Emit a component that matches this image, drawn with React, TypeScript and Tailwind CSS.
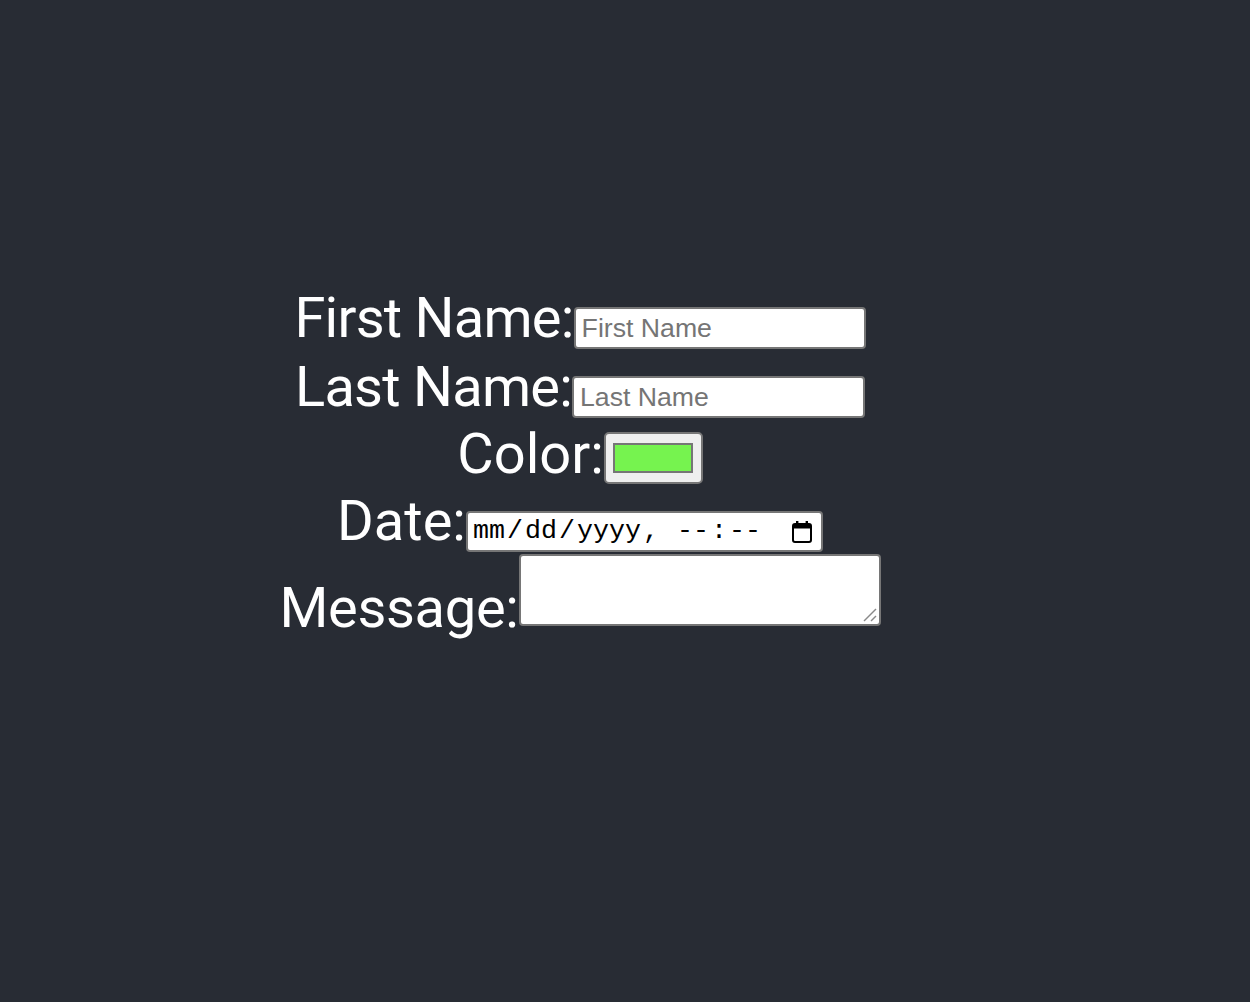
import React from "react";

const labelCls = "text-white text-[56px] leading-[66px] whitespace-nowrap";
const boxCls = "border-2 border-[#767676] rounded-[4px] bg-white";

const Seg = ({ children }: { children: React.ReactNode }) => (
  <span className="px-[2px] whitespace-pre">{children}</span>
);

const CalendarIcon = () => (
  <svg width="20" height="22" viewBox="0 0 20 22" className="shrink-0">
    <rect x="4" y="0" width="2.4" height="4" fill="#000" />
    <rect x="13.6" y="0" width="2.4" height="4" fill="#000" />
    <rect x="1" y="3" width="18" height="18" rx="2" fill="none" stroke="#000" strokeWidth="2" />
    <rect x="1" y="3" width="18" height="4.5" fill="#000" />
  </svg>
);

export default function App() {
  return (
    <div
      className="min-h-screen bg-[#282c34] pt-[285px]"
      style={{ fontFamily: "Roboto, 'Noto Sans', sans-serif" }}
    >
      <form className="w-[1160px] flex flex-col">
        <div className="h-[69px] flex justify-center items-start">
          <label className={`${labelCls} tracking-[-0.75px]`}>First Name:</label>
          <input
            placeholder="First Name"
            className={`${boxCls} mt-[22px] w-[292px] h-[42px] px-[6px] text-[26.67px] text-black placeholder:text-[#757575] outline-none`}
            style={{ fontFamily: "'Liberation Sans', Arial, sans-serif" }}
          />
        </div>
        <div className="h-[67px] flex justify-center items-start">
          <label className={`${labelCls} tracking-[-0.75px]`}>Last Name:</label>
          <input
            placeholder="Last Name"
            className={`${boxCls} mt-[22px] w-[293px] h-[42px] px-[6px] text-[26.67px] text-black placeholder:text-[#757575] outline-none`}
            style={{ fontFamily: "'Liberation Sans', Arial, sans-serif" }}
          />
        </div>
        <div className="h-[67px] flex justify-center items-start">
          <label className={labelCls}>Color:</label>
          <div className="mt-[11px] w-[99px] h-[52px] border-2 border-[#767676] rounded-[5px] bg-[#efefef] flex items-center justify-center">
            <div className="w-[80px] h-[30px] border-2 border-[#767676] bg-[#76f34f]" />
          </div>
        </div>
        <div className="h-[66px] flex justify-center items-start">
          <label className={labelCls}>Date:</label>
          <div
            className={`${boxCls} mt-[23px] w-[357px] h-[41px] pl-[3px] pr-[9px] flex items-center text-[26.67px] text-black leading-none`}
            style={{ fontFamily: "'Liberation Mono', 'Courier New', monospace" }}
          >
            <Seg>mm</Seg>
            <span>/</span>
            <Seg>dd</Seg>
            <span>/</span>
            <Seg>yyyy</Seg>
            <span className="whitespace-pre">, </span>
            <Seg>--</Seg>
            <span>:</span>
            <Seg>--</Seg>
            <div className="flex-1" />
            <CalendarIcon />
          </div>
        </div>
        <div className="flex justify-center items-start">
          <label className={`${labelCls} tracking-[-0.3px] mt-[21px]`}>Message:</label>
          <div className={`${boxCls} relative w-[362px] h-[72px]`}>
            <textarea className="w-full h-full resize-none outline-none bg-transparent" />
            <svg width="16" height="16" viewBox="0 0 16 16" className="absolute right-[1px] bottom-[1px]">
              <line x1="2" y1="14" x2="14" y2="2" stroke="#8a8a8a" strokeWidth="1.5" />
              <line x1="9" y1="14" x2="14" y2="9" stroke="#8a8a8a" strokeWidth="1.5" />
            </svg>
          </div>
        </div>
      </form>
    </div>
  );
}
